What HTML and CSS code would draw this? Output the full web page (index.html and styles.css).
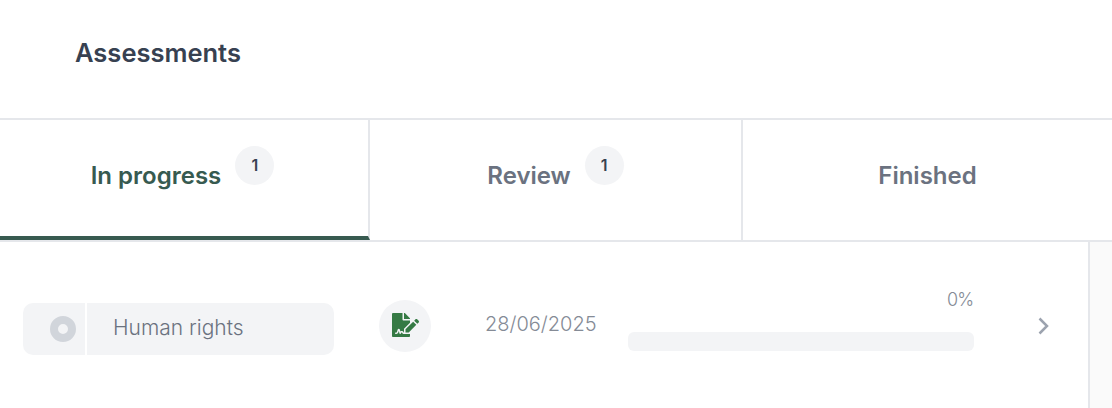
FILE: index.html
```html
<!DOCTYPE html>
<html lang="en">
<head>
  <meta charset="UTF-8" />
  <meta name="viewport" content="width=device-width, initial-scale=1" />
  <title>Assessments</title>
  <link rel="stylesheet" href="styles.css">
</head>
<body>
  <header class="page-head">
    <h1>Assessments</h1>
  </header>

  <nav class="tabs">
    <a class="tab active" href="#">
      <span class="tab-label">In progress</span>
      <span class="badge">1</span>
    </a>
    <a class="tab" href="#">
      <span class="tab-label">Review</span>
      <span class="badge">1</span>
    </a>
    <a class="tab" href="#">
      <span class="tab-label">Finished</span>
    </a>
  </nav>

  <div class="content">
    <main class="list">
      <div class="row">
        <div class="pill">
          <div class="pill-status"><span class="dot"></span></div>
          <div class="pill-name">Human rights</div>
        </div>
        <div class="type-icon">
          <svg width="27" height="24" viewBox="0 0 576 512" aria-hidden="true">
            <path fill="#357a44" d="M218.17 424.14c-2.95-5.92-8.09-6.52-10.17-6.52s-7.22.59-10.02 6.19l-7.67 15.34c-6.37 12.78-25.03 11.37-29.48-2.09L144 386.59l-10.61 31.88c-5.89 17.66-22.38 29.53-41 29.53H80c-8.84 0-16-7.16-16-16s7.16-16 16-16h12.39c4.83 0 9.11-3.08 10.64-7.66l18.19-54.64c3.3-9.81 12.44-16.41 22.78-16.41s19.48 6.59 22.77 16.41l13.88 41.64c19.75-16.19 54.06-9.7 66 14.16 1.89 3.78 5.49 5.95 9.36 6.26v-82.12l128-127.09V160H248c-13.2 0-24-10.8-24-24V0H24C10.7 0 0 10.7 0 24v464c0 13.3 10.7 24 24 24h336c13.3 0 24-10.7 24-24v-40l-128-.12c-16.12-.01-30.91-9.11-37.83-23.74zM384 121.9c0-6.3-2.5-12.4-7-16.9L279.1 7c-4.5-4.5-10.6-7-17-7H256v128h128v-6.1zm-96 225.06V416h68.99l161.68-162.78-67.88-67.88L288 346.96zm280.54-179.63l-31.87-31.87c-9.94-9.94-26.07-9.94-36.01 0l-27.25 27.25 67.88 67.88 27.25-27.25c9.95-9.94 9.95-26.06 0-36.01z"/>
          </svg>
        </div>
        <div class="date">28/06/2025</div>
        <div class="progress">
          <div class="progress-value">0%</div>
          <div class="progress-bar"></div>
        </div>
        <svg class="chevron" width="12" height="18" viewBox="0 0 12 18" aria-hidden="true">
          <path d="M1.500 1.500l7.500 7.500-7.500 7.500" fill="none" stroke="#9ca3af" stroke-width="2.500"/>
        </svg>
      </div>
    </main>
    <aside class="side"></aside>
  </div>
</body>
</html>
```

FILE: styles.css
```css
* {
  box-sizing: border-box;
}

html,
body {
  height: 100%;
}

body {
  margin: 0;
  display: flex;
  flex-direction: column;
  overflow: hidden;
  background: #fff;
  font-family: "Inter", "Noto Sans", sans-serif;
  color: #374151;
}

.page-head {
  height: 120px;
  padding: 35px 0 0 75px;
  border-bottom: 2px solid #e5e7eb;
}

.page-head h1 {
  margin: 0;
  font-size: 25.5px;
  line-height: 36px;
  font-weight: 600;
  color: #374151;
}

.tabs {
  display: flex;
  height: 122px;
  border-bottom: 2px solid #e5e7eb;
}

.tab {
  display: flex;
  flex: 1;
  justify-content: center;
  align-items: center;
  gap: 14px;
  padding-bottom: 8px;
  border-right: 2px solid #e5e7eb;
  color: #6b7280;
  text-decoration: none;
}

.tab:last-child {
  border-right: none;
}

.tab.active {
  flex: none;
  width: 370px;
  padding-right: 3px;
  padding-bottom: 4px;
  border-bottom: 4px solid #375a50;
  color: #375a50;
}

.tab:nth-child(2) {
  flex: none;
  width: 373px;
}

.tab-label {
  font-size: 24px;
  line-height: 32px;
  font-weight: 600;
}

.badge {
  display: flex;
  justify-content: center;
  align-items: center;
  width: 39px;
  height: 39px;
  margin-top: -21px;
  padding-bottom: 2px;
  border-radius: 50%;
  background: #f3f4f6;
  font-size: 16px;
  font-weight: 600;
  color: #374151;
}

.content {
  display: flex;
  flex: 1;
}

.list {
  flex: 1;
  padding: 58px 38px 0 23px;
}

.side {
  width: 24px;
  border-left: 2px solid #e5e7eb;
  background: #fafafa;
}

.row {
  display: flex;
  align-items: flex-start;
}

.pill {
  display: flex;
  width: 311px;
  height: 52px;
  margin-top: 3px;
  gap: 2px;
}

.pill-status {
  display: flex;
  justify-content: center;
  align-items: center;
  width: 62px;
  padding-left: 18px;
  border-radius: 10px 0 0 10px;
  background: #f3f4f6;
}

.dot {
  width: 26px;
  height: 26px;
  border: 8px solid #d1d5db;
  border-radius: 50%;
  background: #f3f4f6;
}

.pill-name {
  flex: 1;
  padding-left: 26px;
  border-radius: 0 10px 10px 0;
  background: #f3f4f6;
  font-size: 21px;
  font-weight: 300;
  line-height: 49px;
  color: #6b7280;
}

.type-icon {
  display: flex;
  justify-content: center;
  align-items: center;
  width: 52px;
  height: 52px;
  margin-left: 45px;
  padding: 0 0 2px 1px;
  border-radius: 50%;
  background: #f3f4f6;
}

.date {
  width: 143px;
  margin-left: 54px;
  font-size: 20px;
  font-weight: 300;
  line-height: 48px;
  color: #858b96;
}

.progress {
  width: 346px;
  margin-top: -12px;
}

.progress-value {
  padding-right: 1px;
  text-align: right;
  font-size: 18px;
  font-weight: 300;
  letter-spacing: -1px;
  line-height: 24px;
  color: #858b96;
}

.progress-bar {
  height: 19px;
  margin-top: 20px;
  border-radius: 6px;
  background: #f3f4f6;
}

.chevron {
  margin: 17px 0 0 64px;
}
```
